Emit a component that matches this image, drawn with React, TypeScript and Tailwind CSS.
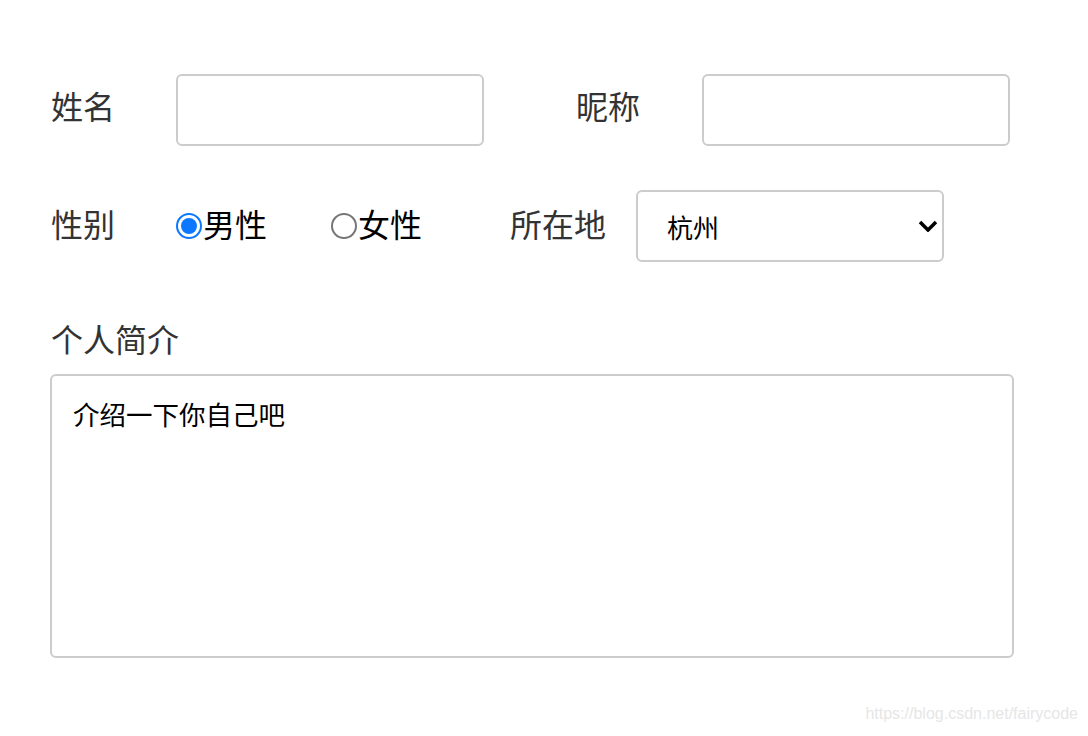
import { useState } from 'react';

const cjk = "font-['PingFang_SC','Noto_Sans_CJK_SC',sans-serif]";

function Radio({ checked, label, onClick }: { checked: boolean; label: string; onClick: () => void }) {
  return (
    <button type="button" onClick={onClick} className="flex items-center text-[32px] leading-none text-black">
      {checked ? (
        <span className="flex items-center justify-center w-[26px] h-[26px] rounded-full border-2 border-[#0b78ff] bg-white">
          <span className="w-[16px] h-[16px] rounded-full bg-[#0b78ff]" />
        </span>
      ) : (
        <span className="w-[26px] h-[26px] rounded-full border-2 border-[#767676] bg-white" />
      )}
      <span className="ml-[1px] mb-[6px]">{label}</span>
    </button>
  );
}

export default function App() {
  const [gender, setGender] = useState('male');
  const [city, setCity] = useState('杭州');

  return (
    <div className={`w-[1088px] h-[736px] bg-white relative ${cjk}`}>
      <div className="pt-[74px] pl-[50px]">
        {/* 姓名 / 昵称 */}
        <div className="flex items-center h-[72px]">
          <label className="w-[126px] text-[32px] text-[#333] leading-none pl-[1px] mb-[10px]">姓名</label>
          <input className="w-[308px] h-[72px] border-2 border-[#ccc] rounded-[6px] outline-none px-4 text-[26px]" />
          <label className="ml-[92px] w-[126px] text-[32px] text-[#333] leading-none mb-[10px]">昵称</label>
          <input className="w-[308px] h-[72px] border-2 border-[#ccc] rounded-[6px] outline-none px-4 text-[26px]" />
        </div>

        {/* 性别 / 所在地 */}
        <div className="flex items-center h-[72px] mt-[44px]">
          <label className="w-[126px] text-[32px] text-[#333] leading-none pl-[1px] mb-[6px]">性别</label>
          <Radio checked={gender === 'male'} label="男性" onClick={() => setGender('male')} />
          <div className="ml-[64px]">
            <Radio checked={gender === 'female'} label="女性" onClick={() => setGender('female')} />
          </div>
          <label className="ml-[88px] w-[126px] text-[32px] text-[#333] leading-none mb-[6px]">所在地</label>
          <div className="relative">
            <select
              value={city}
              onChange={(e) => setCity(e.target.value)}
              className={`appearance-none w-[308px] h-[72px] border-2 border-[#ccc] rounded-[6px] bg-white pl-[29px] text-[26px] text-black outline-none ${cjk}`}
            >
              <option>杭州</option>
              <option>上海</option>
              <option>北京</option>
            </select>
            <svg className="absolute right-[6px] top-[30px] pointer-events-none" width="20" height="12" viewBox="0 0 20 12">
              <path d="M2 2 L10 10 L18 2" fill="none" stroke="black" strokeWidth="3.5" />
            </svg>
          </div>
        </div>

        {/* 个人简介 */}
        <div className="mt-[60px]">
          <label className="block text-[32px] text-[#333] leading-none pl-[1px]">个人简介</label>
          <textarea
            defaultValue="介绍一下你自己吧"
            className={`mt-[20px] block w-[964px] h-[284px] border-2 border-[#ccc] rounded-[6px] outline-none resize-none px-[21px] py-[20px] text-[26.5px] leading-[36px] text-black ${cjk}`}
          />
        </div>
      </div>

      <div className="absolute right-[10px] bottom-[10px] text-[16px] text-[#e6e6e6] font-['Liberation_Sans',sans-serif]">
        https://blog.csdn.net/fairycode
      </div>
    </div>
  );
}
